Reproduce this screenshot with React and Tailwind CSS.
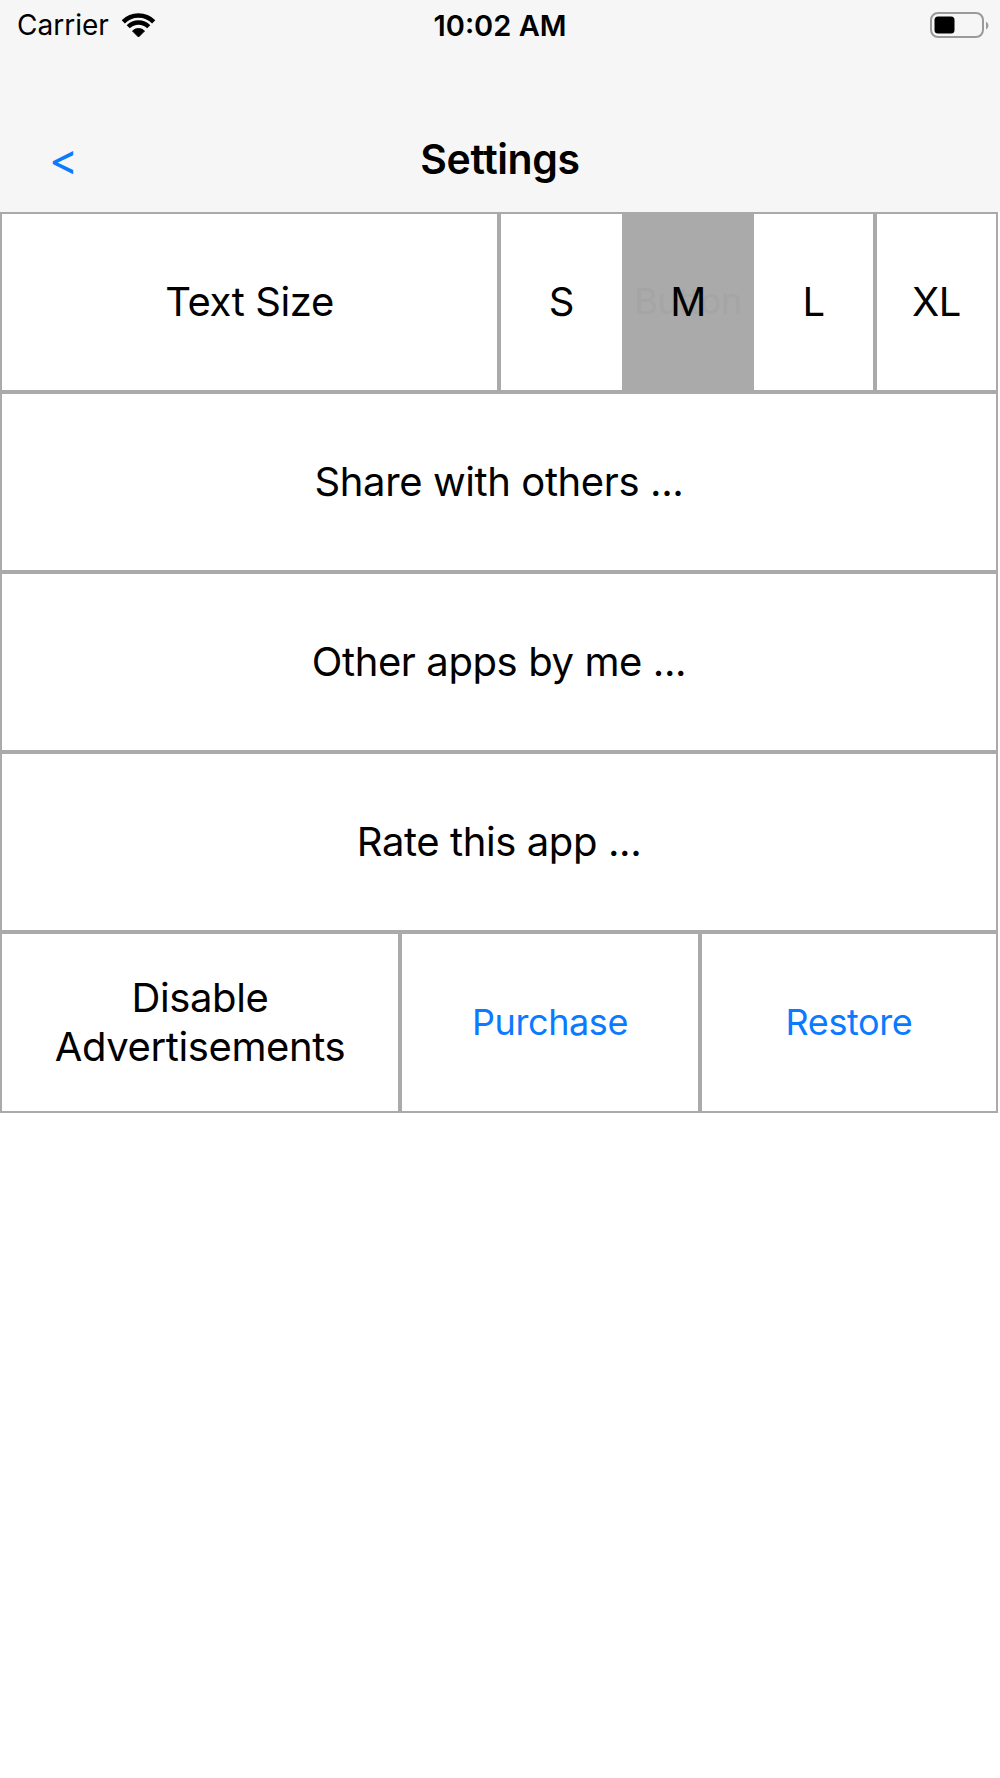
import React from "react";

function Wifi() {
  return (
    <svg width="37" height="26" viewBox="0 0 37 26" className="block">
      <path d="M18.5 25 L12.5 19 A8.5 8.5 0 0 1 24.5 19 Z" fill="#000" strokeLinejoin="round" stroke="#000" strokeWidth="1" />
      <path d="M8.25 14.75 A14.5 14.5 0 0 1 28.75 14.75" fill="none" stroke="#000" strokeWidth="4.5" />
      <path d="M3.3 9.8 A21.5 21.5 0 0 1 33.7 9.8" fill="none" stroke="#000" strokeWidth="4.5" />
    </svg>
  );
}

function Battery() {
  return (
    <svg width="60" height="26" viewBox="0 0 60 26" className="block">
      <rect x="1" y="1" width="52" height="24" rx="7" fill="none" stroke="#9a9a9a" strokeWidth="2" />
      <rect x="4.5" y="4.5" width="20" height="17" rx="3.5" fill="#000" />
      <path d="M56 9.5 A4.5 4.5 0 0 1 56 17.5 Z" fill="#9a9a9a" />
    </svg>
  );
}

function Cell({ className = "", children }) {
  return (
    <div
      className={
        "flex h-full items-center justify-center border-2 border-[#aaaaaa] text-center " +
        className
      }
    >
      {children}
    </div>
  );
}

export default function App() {
  return (
    <div
      className="min-h-[1778px] w-[1000px] bg-white text-black"
      style={{ fontFamily: "Inter, 'Liberation Sans', sans-serif" }}
    >
      <div className="flex h-[212px] flex-col bg-[#f6f6f6]">
        <div className="grid h-[50px] grid-cols-3 items-center">
          <div className="flex items-center gap-[11px] pl-[17px]">
            <span className="text-[28px] leading-none">Carrier</span>
            <Wifi />
          </div>
          <div className="text-center text-[29px] font-semibold leading-none">10:02 AM</div>
          <div className="flex justify-end pr-[10px]">
            <Battery />
          </div>
        </div>
        <div className="h-[64px]" />
        <div className="grid h-[90px] grid-cols-[1fr_auto_1fr] items-center">
          <div className="pl-[49px] text-[44px] leading-none text-[#0a7aff]">&lt;</div>
          <div className="text-[41px] font-semibold leading-none tracking-[-0.01em]">Settings</div>
          <div />
        </div>
        <div className="h-[8px]" />
      </div>

      <div className="flex w-[998px] flex-col text-[40px] leading-[1.22] tracking-[-0.01em]">
        <div className="flex h-[180px]">
          <div className="w-[499px]">
            <Cell>Text Size</Cell>
          </div>
          <div className="w-[125px]">
            <Cell>S</Cell>
          </div>
          <div className="w-[128px]">
            <Cell className="relative overflow-hidden bg-[#aaaaaa]">
              <span className="absolute inset-0 flex items-center justify-center whitespace-nowrap text-[36px] text-[#a5a5a5]">Button</span>
              <span className="relative">M</span>
            </Cell>
          </div>
          <div className="w-[123px]">
            <Cell>L</Cell>
          </div>
          <div className="w-[123px]">
            <Cell>XL</Cell>
          </div>
        </div>
        <div className="h-[180px]">
          <Cell>Share with others ...</Cell>
        </div>
        <div className="h-[180px]">
          <Cell>Other apps by me ...</Cell>
        </div>
        <div className="h-[180px]">
          <Cell>Rate this app ...</Cell>
        </div>
        <div className="flex h-[181px]">
          <div className="w-[400px]">
            <Cell>
              Disable
              <br />
              Advertisements
            </Cell>
          </div>
          <div className="w-[300px]">
            <Cell className="text-[36px] text-[#0a7aff]">Purchase</Cell>
          </div>
          <div className="w-[298px]">
            <Cell className="text-[36px] text-[#0a7aff]">Restore</Cell>
          </div>
        </div>
      </div>
    </div>
  );
}
